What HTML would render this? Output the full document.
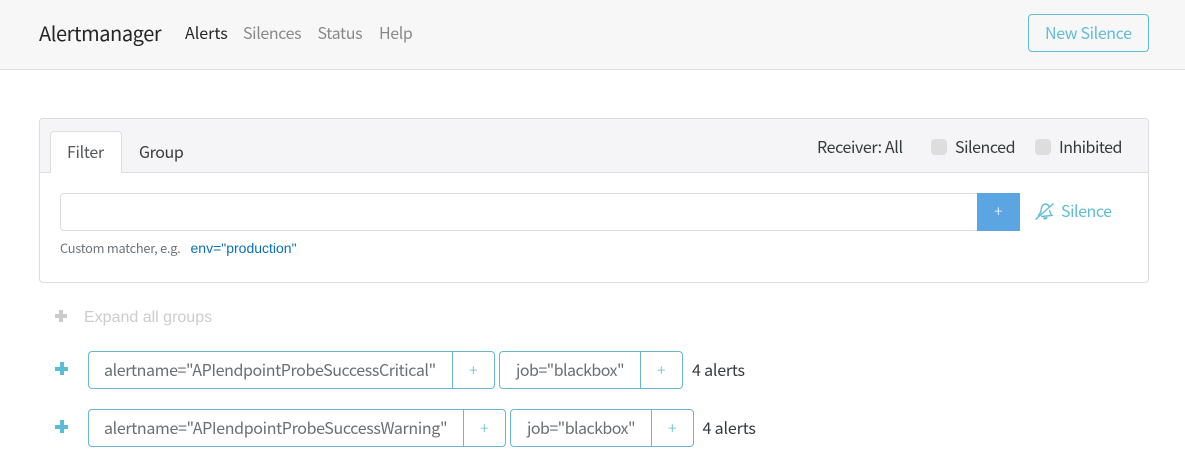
<!DOCTYPE html>
<html><head><meta charset="utf-8"><style>
*{box-sizing:border-box}
html,body{margin:0;padding:0;width:1185px;height:460px;overflow:hidden;background:#fff}
body{position:relative;font-family:"Noto Sans CJK JP","Liberation Sans",sans-serif;font-size:16px;color:#373a3c}
.a{position:absolute}
.t{position:absolute;white-space:nowrap;line-height:24px;height:24px}
.l{font-family:"Liberation Sans",sans-serif}
.tag{position:absolute;height:38px;border:1px solid #66b8cf;background:#fff}
.lft{border-radius:4px 0 0 4px;border-right:0}
.rgt{border-radius:0 4px 4px 0}
.chk{position:absolute;width:16px;height:16px;background:#ddd;border-radius:4px;top:139px}
.plus{position:absolute;background:#5bbcd8}
.p{color:#5bbcd8;font-size:16px;font-weight:300}
.n{color:#6b6f72}
</style></head><body>
<div class="a" style="left:0;top:0;width:1185px;height:70px;background:#f7f7f7;border-bottom:1px solid #ddd"></div>
<span class="t" style="left:39px;top:21px;font-size:20px;letter-spacing:-.42px;color:rgba(0,0,0,.85)">Alertmanager</span>
<span class="t" style="left:185px;top:20px;color:rgba(0,0,0,.85)">Alerts</span>
<span class="t" style="left:243px;top:20px;letter-spacing:-.37px;color:rgba(0,0,0,.45)">Silences</span>
<span class="t" style="left:317.500px;top:20px;letter-spacing:-.33px;color:rgba(0,0,0,.45)">Status</span>
<span class="t" style="left:379px;top:20px;letter-spacing:-.4px;color:rgba(0,0,0,.45)">Help</span>
<div class="a" style="left:1028px;top:14px;width:121px;height:38px;border:1px solid #62bcd6;border-radius:4px"></div>
<span class="t" style="left:1045px;top:20px;letter-spacing:-.37px;color:#62bcd6">New Silence</span>

<div class="a" style="left:39px;top:118px;width:1110px;height:165px;border:1px solid #ddd;border-radius:4px"></div>
<div class="a" style="left:40px;top:119px;width:1108px;height:54px;background:#f5f5f7;border-bottom:1px solid #ddd;border-radius:3px 3px 0 0"></div>
<div class="a" style="left:50px;top:131px;width:72px;height:42px;background:#fff;border:1px solid #ddd;border-bottom:0;border-radius:4px 4px 0 0"></div>
<span class="t" style="left:67px;top:139px;letter-spacing:-.3px;color:#55595c">Filter</span>
<span class="t" style="left:139px;top:139px;letter-spacing:-.4px">Group</span>
<span class="t" style="left:817px;top:134px;letter-spacing:-.38px">Receiver: All</span>
<div class="chk" style="left:931px"></div>
<span class="t" style="left:955px;top:134px;letter-spacing:-.45px">Silenced</span>
<div class="chk" style="left:1035px"></div>
<span class="t" style="left:1059px;top:134px;letter-spacing:-.5px">Inhibited</span>

<div class="a" style="left:60px;top:193px;width:918px;height:38px;border:1px solid #ddd;border-radius:4px 0 0 4px"></div>
<div class="a" style="left:977px;top:193px;width:43px;height:38px;background:#5aa5e2"></div>
<span class="t" style="left:994px;top:198px;color:#fff;font-size:16px;font-weight:300">+</span>
<svg class="a" style="left:1035px;top:202px" width="20" height="18" viewBox="0 0 20 18" fill="none" stroke="#62bcd6" stroke-width="1.4">
<path d="M.5 17.500L18.500 1.500"/><path d="M3 13.500C6 11.500 6 8.500 6.500 6C7 3 9.500 1.500 11.500 2.200C13 2.700 14 4 14.500 5"/><path d="M14.500 8C15 10.500 15.500 12 17 13.500L6 14.500"/><path d="M8.500 15.500C9.500 17.500 11.500 17 12 15" fill="#62bcd6"/>
</svg>
<span class="t" style="left:1061px;top:198px;letter-spacing:-.45px;color:#62bcd6">Silence</span>
<span class="t" style="left:60px;top:236px;font-size:12.800px;letter-spacing:-.25px;color:#6d7378">Custom matcher, e.g.</span>
<span class="t l" style="left:190.500px;top:236px;font-size:14px;color:#0a70bd">env="production"</span>

<div class="plus" style="left:55px;top:314px;width:12px;height:4px;background:#ccc"></div>
<div class="plus" style="left:59px;top:310px;width:4px;height:12px;background:#ccc"></div>
<span class="t l" style="left:84px;top:306px;color:#ccc">Expand all groups</span>

<div class="plus" style="left:55px;top:367px;width:13px;height:4px"></div>
<div class="plus" style="left:59.500px;top:362px;width:4px;height:13px"></div>
<div class="tag lft" style="left:88px;top:351px;width:365px"></div>
<div class="tag rgt" style="left:452px;top:351px;width:43px"></div>
<span class="t n" style="left:104px;top:357px;letter-spacing:-.395px">alertname="APIendpointProbeSuccessCritical"</span>
<span class="t p" style="left:469px;top:357px">+</span>
<div class="tag lft" style="left:499px;top:351px;width:142px"></div>
<div class="tag rgt" style="left:640px;top:351px;width:43px"></div>
<span class="t n" style="left:516px;top:357px;letter-spacing:-.55px">job="blackbox"</span>
<span class="t p" style="left:657px;top:357px">+</span>
<span class="t" style="left:692px;top:357px;letter-spacing:-.2px">4 alerts</span>

<div class="plus" style="left:55px;top:425px;width:13px;height:4px"></div>
<div class="plus" style="left:59.500px;top:420px;width:4px;height:13px"></div>
<div class="tag lft" style="left:88px;top:409px;width:376px"></div>
<div class="tag rgt" style="left:463px;top:409px;width:43px"></div>
<span class="t n" style="left:104px;top:415px;letter-spacing:-.35px">alertname="APIendpointProbeSuccessWarning"</span>
<span class="t p" style="left:480px;top:415px">+</span>
<div class="tag lft" style="left:510px;top:409px;width:142px"></div>
<div class="tag rgt" style="left:651px;top:409px;width:43px"></div>
<span class="t n" style="left:527px;top:415px;letter-spacing:-.55px">job="blackbox"</span>
<span class="t p" style="left:668px;top:415px">+</span>
<span class="t" style="left:702.500px;top:415px;letter-spacing:-.15px">4 alerts</span>
</body></html>
